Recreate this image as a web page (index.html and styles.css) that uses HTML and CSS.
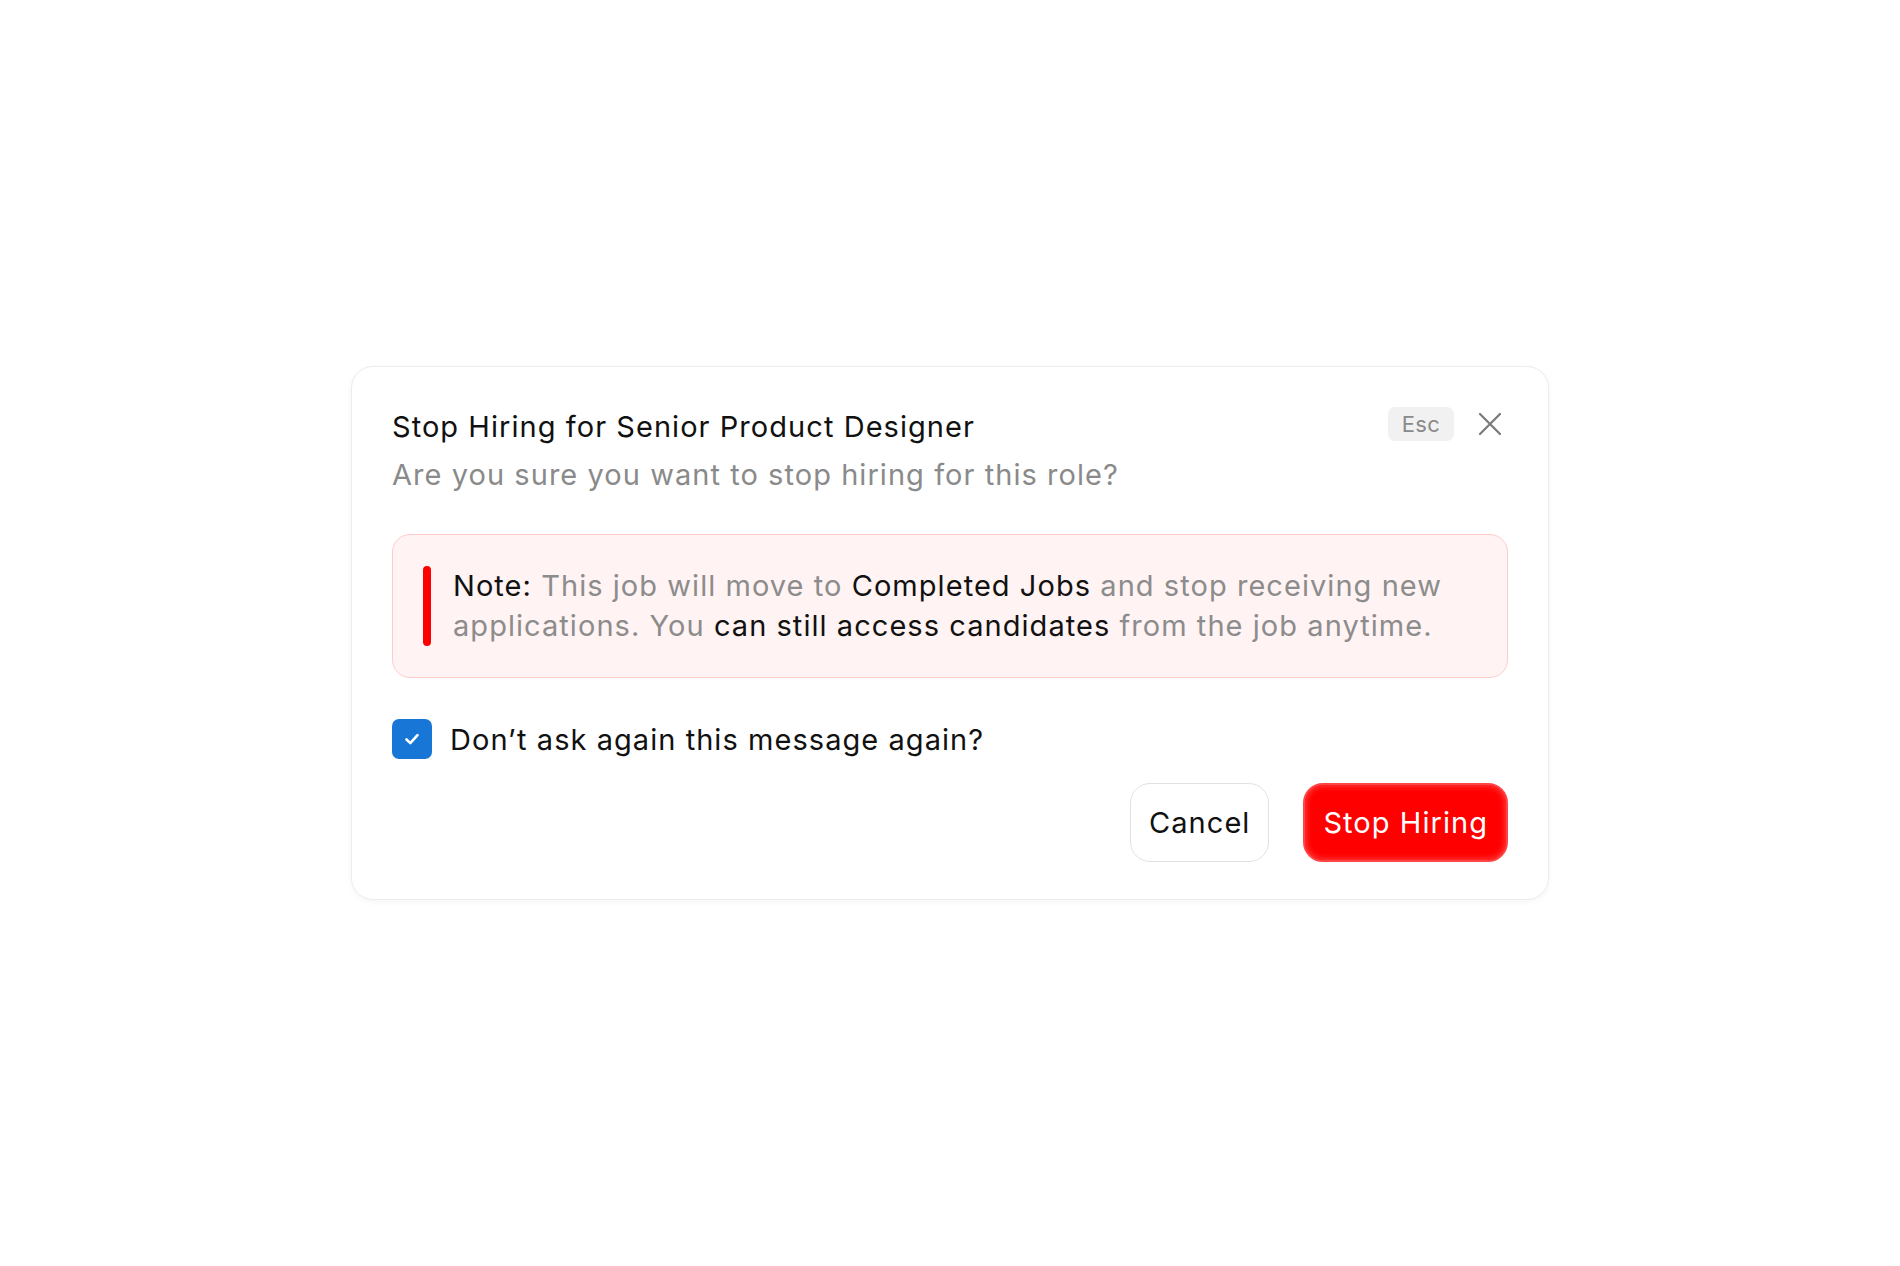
FILE: index.html
```html
<!DOCTYPE html>
<html lang="en">
<head>
<meta charset="utf-8">
<title>Stop Hiring</title>
<link rel="stylesheet" href="styles.css">
</head>
<body>
  <div class="dialog" role="dialog" aria-labelledby="dlg-title">
    <div class="header">
      <div class="heading">
        <h2 id="dlg-title" class="title">Stop Hiring for Senior Product Designer</h2>
        <p class="subtitle">Are you sure you want to stop hiring for this role?</p>
      </div>
      <div class="header-actions">
        <span class="kbd">Esc</span>
        <button class="close" aria-label="Close">
          <svg width="24" height="24" viewBox="0 0 24 24" fill="none" stroke="#7a7a7a" stroke-width="2.2" stroke-linecap="round"><path d="M2 2L22 22M22 2L2 22"/></svg>
        </button>
      </div>
    </div>

    <div class="note">
      <span class="note-bar"></span>
      <p class="note-text"><span class="strong">Note:</span> This job will move to <span class="strong">Completed Jobs</span> and stop receiving new applications. You <span class="strong">can still access candidates</span> from the job anytime.</p>
    </div>

    <label class="check-row">
      <span class="checkbox">
        <svg width="20" height="20" viewBox="0 0 20 20" fill="none" stroke="#fff" stroke-width="2.6" stroke-linecap="round" stroke-linejoin="round"><path d="M4.5 10.5l3.8 3.6 7.2-8"/></svg>
      </span>
      <span class="check-label">Don’t ask again this message again?</span>
    </label>

    <div class="footer">
      <button class="btn btn-cancel">Cancel</button>
      <button class="btn btn-danger">Stop Hiring</button>
    </div>
  </div>
</body>
</html>
```

FILE: styles.css
```css
* { box-sizing: border-box; }

html, body {
  margin: 0;
  padding: 0;
  background: #ffffff;
}

body {
  min-height: 100vh;
  display: flex;
  align-items: center;
  justify-content: center;
  font-family: Inter, "Noto Sans", "Liberation Sans", sans-serif;
  color: #111111;
  letter-spacing: 1.05px;
}

.dialog {
  width: 1198px;
  background: #ffffff;
  border: 1px solid #ececec;
  border-radius: 22px;
  box-shadow: 0 2px 6px rgba(0, 0, 0, 0.04);
  padding: 42px 40px 37px;
  display: flex;
  flex-direction: column;
}

.header {
  display: flex;
  justify-content: space-between;
  align-items: flex-start;
}

.heading {
  display: flex;
  flex-direction: column;
  gap: 12px;
}

.title {
  margin: 0;
  font-size: 29px;
  line-height: 36px;
  font-weight: 400;
  color: #111111;
}

.subtitle {
  margin: 0;
  font-size: 29px;
  line-height: 36px;
  color: #8a8a8a;
}

.header-actions {
  display: flex;
  align-items: center;
  gap: 18px;
  margin-top: -3px;
}

.kbd {
  display: inline-flex;
  align-items: center;
  justify-content: center;
  width: 66px;
  height: 34px;
  border-radius: 7px;
  background: #f1f1f1;
  color: #8a8a8a;
  font-size: 22px;
  letter-spacing: 0.3px;
}

.close {
  border: 0;
  background: transparent;
  padding: 0;
  width: 36px;
  height: 36px;
  display: flex;
  align-items: center;
  justify-content: center;
  cursor: pointer;
}

.note {
  margin-top: 41px;
  display: flex;
  align-items: stretch;
  gap: 22px;
  padding: 31px 30px;
  background: #fff3f3;
  border: 1.5px solid #ffcccc;
  border-radius: 18px;
}

.note-bar {
  flex: 0 0 8px;
  width: 8px;
  border-radius: 4px;
  background: #ff0000;
}

.note-text {
  margin: 0;
  font-size: 29px;
  line-height: 40px;
  color: #8c8c8c;
}

.strong {
  color: #111111;
}

.check-row {
  margin-top: 41px;
  display: flex;
  align-items: center;
  gap: 18px;
}

.checkbox {
  width: 40px;
  height: 40px;
  border-radius: 7px;
  background: #1877d6;
  display: flex;
  align-items: center;
  justify-content: center;
}

.check-label {
  font-size: 29px;
  color: #111111;
}

.footer {
  margin-top: 24px;
  display: flex;
  justify-content: flex-end;
  gap: 34px;
}

.btn {
  height: 79px;
  padding: 0 18px;
  border-radius: 20px;
  font-family: inherit;
  font-size: 29px;
  letter-spacing: 1.05px;
  cursor: pointer;
}

.btn-cancel {
  background: #ffffff;
  border: 1.5px solid #e2e2e2;
  color: #111111;
}

.btn-danger {
  background: #ff0000;
  border: 2px solid #ff4545;
  color: #ffffff;
  box-shadow: inset 0 0 5px 2px rgba(255, 90, 90, 0.55);
}
```
